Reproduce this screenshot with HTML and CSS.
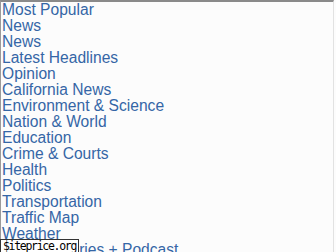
FILE: index.html
```html
<!DOCTYPE html>
<html>
    <head>
        <meta charset="UTF-8">
        <title>Sections</title>
        <link rel="stylesheet" href="styles.css">
    </head>
    <body>
        <div class="frame">
            <ul class="nav-list">
                <li><a href="#">Most Popular</a></li>
                <li><a href="#">News</a></li>
                <li><a href="#">News</a></li>
                <li><a href="#">Latest Headlines</a></li>
                <li><a href="#">Opinion</a></li>
                <li><a href="#">California News</a></li>
                <li><a href="#">Environment &amp; Science</a></li>
                <li><a href="#">Nation &amp; World</a></li>
                <li><a href="#">Education</a></li>
                <li><a href="#">Crime &amp; Courts</a></li>
                <li><a href="#">Health</a></li>
                <li><a href="#">Politics</a></li>
                <li><a href="#">Transportation</a></li>
                <li><a href="#">Traffic Map</a></li>
                <li><a href="#">Weather</a></li>
                <li><a href="#">Original Series + Podcast</a></li>
            </ul>
        </div>
        <div class="watermark">$iteprice.org</div>
    </body>
</html>
```

FILE: styles.css
```css
html, body {
    margin: 0;
    padding: 0;
    height: 100%;
    overflow: hidden;
    background-color: #fcfcfc;
}
.frame {
    height: 100%;
    width: 334px;
    box-sizing: border-box;
    border-top: 2px solid #8a8a8a;
    border-left: 1px solid #9a9a9a;
    border-right: 1px solid #e2e2e2;
    padding-left: 1px;
}
.nav-list {
    list-style: none;
    margin: 0;
    padding: 0;
    font-family: "Liberation Sans", Arial, sans-serif;
    font-size: 15.6px;
    line-height: 16px;
}
.nav-list a {
    color: #3566a6;
    text-decoration: none;
}
.watermark {
    position: absolute;
    left: 0;
    bottom: 0;
    padding: 0 2px 0 2px;
    background-color: #fff;
    border: 1px solid #333;
    border-bottom: none;
    font-family: "DejaVu Sans Mono", monospace;
    font-size: 11.5px;
    letter-spacing: -1.3px;
    line-height: 12px;
    white-space: nowrap;
    color: #000;
}
```
